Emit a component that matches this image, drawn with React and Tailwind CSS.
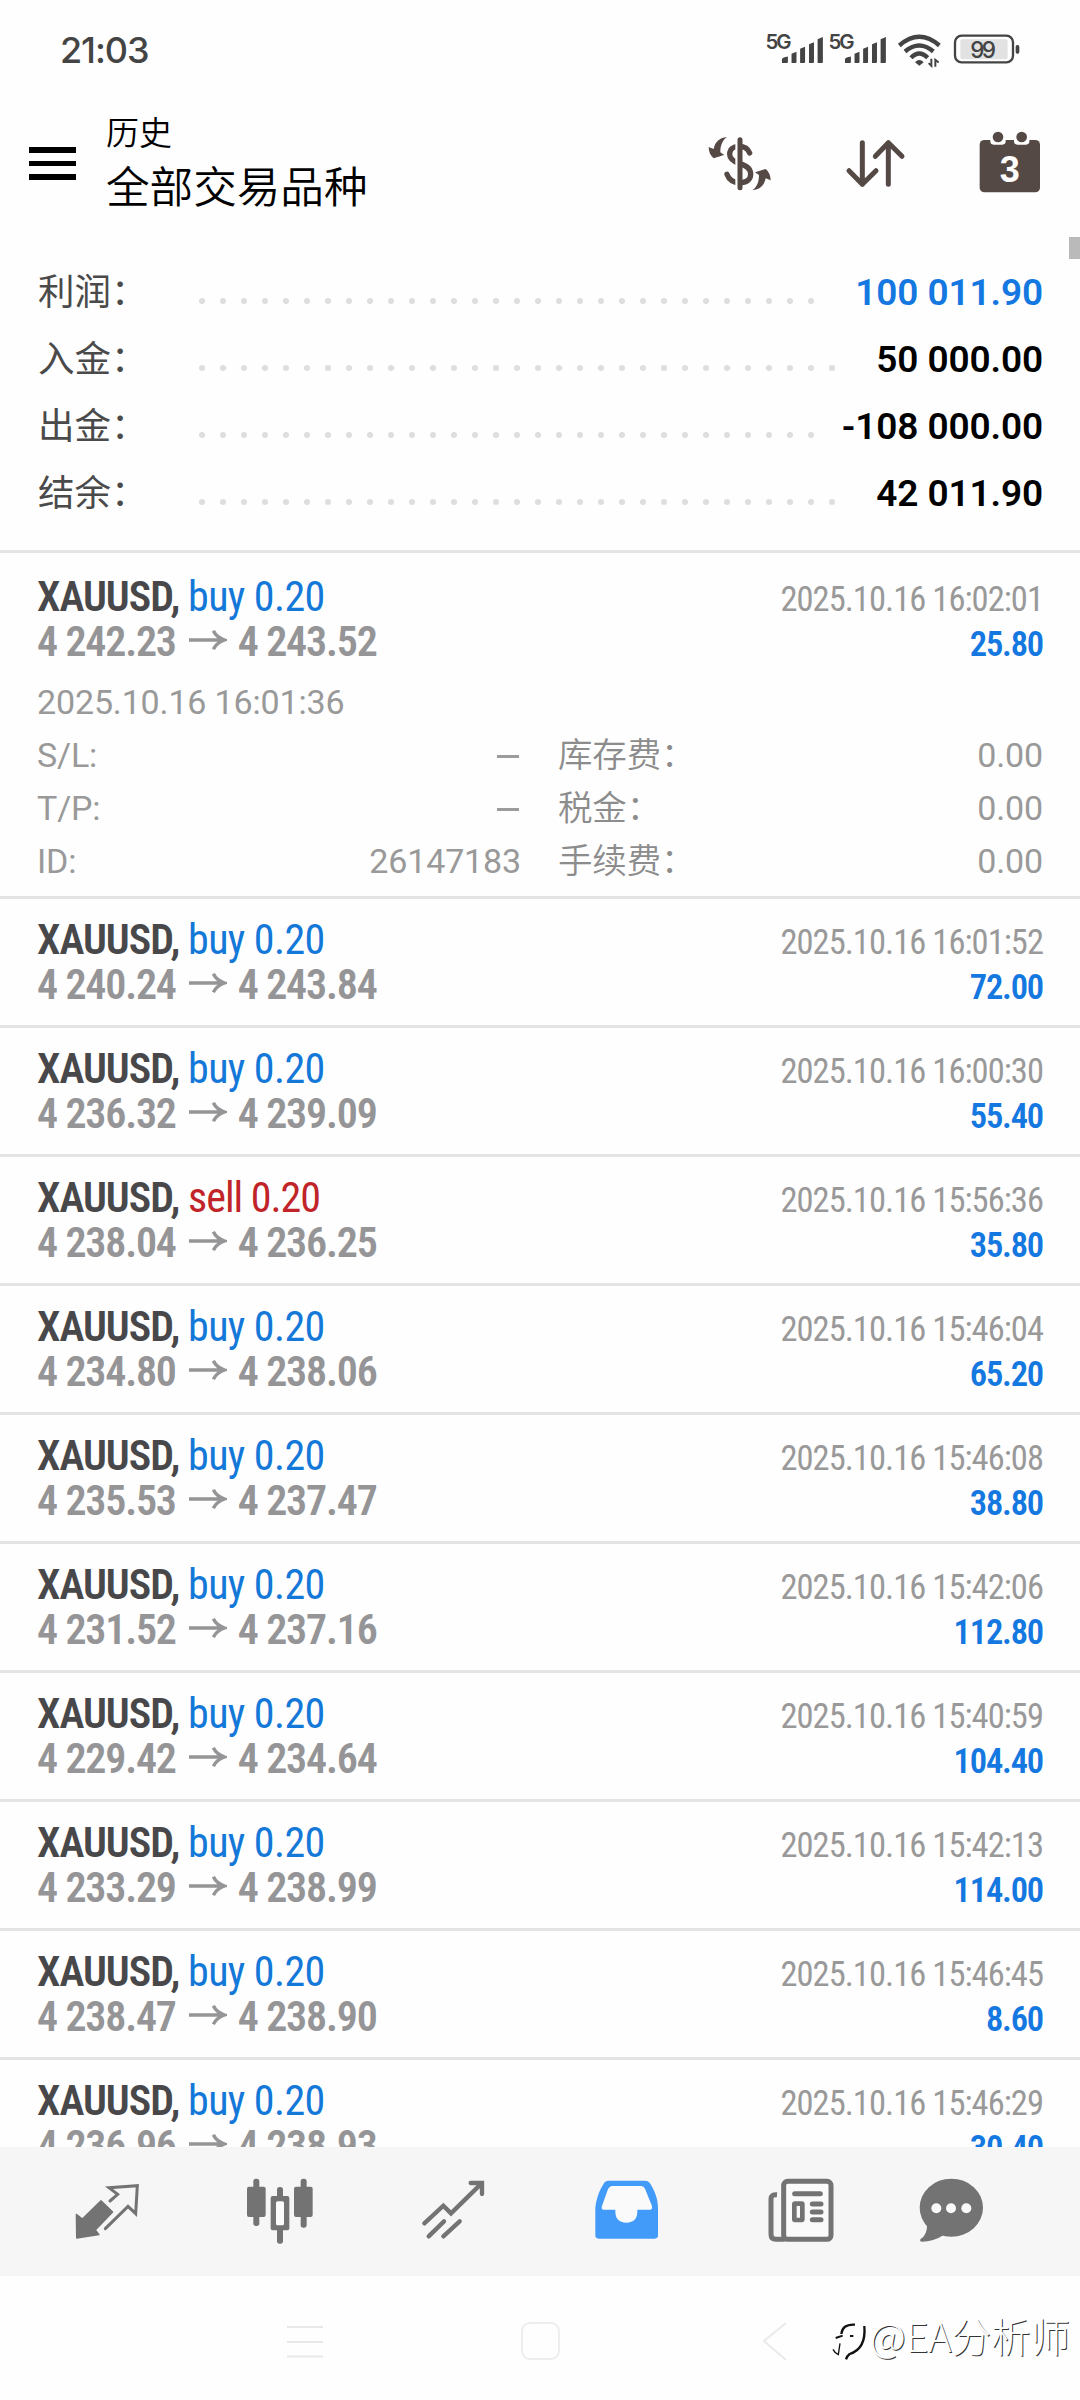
import clsx from "clsx";

const summary = [
  { label: "利润：", value: "100 011.90", blue: true },
  { label: "入金：", value: "50 000.00" },
  { label: "出金：", value: "-108 000.00" },
  { label: "结余：", value: "42 011.90" },
];

const deals = [
  { type: "buy", from: "4 242.23", to: "4 243.52", time: "2025.10.16 16:02:01", profit: "25.80", open: true },
  { type: "buy", from: "4 240.24", to: "4 243.84", time: "2025.10.16 16:01:52", profit: "72.00" },
  { type: "buy", from: "4 236.32", to: "4 239.09", time: "2025.10.16 16:00:30", profit: "55.40" },
  { type: "sell", from: "4 238.04", to: "4 236.25", time: "2025.10.16 15:56:36", profit: "35.80" },
  { type: "buy", from: "4 234.80", to: "4 238.06", time: "2025.10.16 15:46:04", profit: "65.20" },
  { type: "buy", from: "4 235.53", to: "4 237.47", time: "2025.10.16 15:46:08", profit: "38.80" },
  { type: "buy", from: "4 231.52", to: "4 237.16", time: "2025.10.16 15:42:06", profit: "112.80" },
  { type: "buy", from: "4 229.42", to: "4 234.64", time: "2025.10.16 15:40:59", profit: "104.40" },
  { type: "buy", from: "4 233.29", to: "4 238.99", time: "2025.10.16 15:42:13", profit: "114.00" },
  { type: "buy", from: "4 238.47", to: "4 238.90", time: "2025.10.16 15:46:45", profit: "8.60" },
  { type: "buy", from: "4 236.96", to: "4 238.93", time: "2025.10.16 15:46:29", profit: "30.40" },
];

const details = [
  ["S/L:", "—", "库存费：", "0.00"],
  ["T/P:", "—", "税金：", "0.00"],
  ["ID:", "26147183", "手续费：", "0.00"],
];

const Signal = () => (
  <svg className="mt-[32px] h-[32px] w-[58px] overflow-visible" viewBox="0 0 175 97" fill="#444">
    <text x="-2" y="50" textLength="79" className="font-[Inter] text-[62px] font-semibold">
      5G
    </text>
    <path d="M48 94V82Q50 76 66 74V91Q66 94 63 94ZM77 94V66L92 60V91Q92 94 89 94ZM103 94V51L118 45V91Q118 94 115 94ZM130 94V37L145 31V91Q145 94 142 94ZM156 94V22L172 15V91Q172 94 169 94Z" />
  </svg>
);

const StatusBar = () => (
  <div className="flex h-[100px] shrink-0 items-start justify-between pr-[59px] pl-[60px] text-[#444]">
    <span className="mt-[28px] font-[Inter] text-[36px] leading-[44px] font-medium tracking-[-1.1px]">21:03</span>
    <div className="flex items-start">
      <div className="flex gap-[5px]">
        <Signal />
        <Signal />
      </div>
      <svg className="mt-[33px] ml-[10px] h-[35px] w-[44px]" viewBox="0 0 132 104" fill="none" stroke="#444" strokeWidth="13">
        <path d="M7 37Q67 -15 127 37M24 55Q67 19 109 55M42 74Q67 48 92 74" />
        <path d="M54 87Q67 74 80 87L67 98Z" fill="#444" stroke="none" />
        <path d="M103 77V98L95 90M115 101V80L125 88" strokeWidth="6" />
      </svg>
      <svg className="mt-[33px] ml-[12px] h-[32px] w-[68px]" viewBox="0 0 204 96" fill="#444">
        <rect x="6" y="8" width="174" height="80" rx="20" fill="none" stroke="#444" strokeWidth="7" />
        <rect x="22" y="19" width="142" height="60" rx="8" fill="#e2e2e2" />
        <rect x="188" y="36" width="11" height="26" rx="5" />
        <text x="52" y="74" textLength="77" className="font-[Inter] text-[68px] font-medium">
          99
        </text>
      </svg>
    </div>
  </div>
);

const Header = () => (
  <div className="flex h-[138px] shrink-0 items-start justify-between pr-[38px] pl-[29px]">
    <div className="flex">
      <div className="mt-[47px] flex h-[33px] w-[47px] flex-col justify-between">
        <span className="h-[6px] bg-black" />
        <span className="h-[5px] bg-black" />
        <span className="h-[6px] bg-black" />
      </div>
      <div className="mt-[11px] ml-[30px] font-[350] text-black">
        <p className="text-[33px] leading-[45px]">历史</p>
        <p className="text-[43.6px] leading-[65px]">全部交易品种</p>
      </div>
    </div>
    <div className="mt-[30px] flex items-center gap-[71px]">
      <svg className="mt-[3px] -mr-px h-[58px] w-[68px]" viewBox="0 0 204 174" fill="none" stroke="#554946" strokeLinecap="round">
        <path
          d="M128 54C122 38 108 34 96 34C78 34 68 44 68 58C68 72 80 80 98 86C120 92 131 102 131 118C131 134 118 143 98 143C76 143 66 134 60 118"
          strokeWidth="16"
        />
        <path d="M90 16V158" stroke="#fefefe" strokeWidth="10" strokeLinecap="butt" />
        <path d="M99 14V158" strokeWidth="15" />
        <g fill="#554946" stroke="none">
          <path id="swap" d="M60 6C38 8 24 20 20 42L5 36C5 50 10 62 20 70C32 66 44 62 52 60L40 52C40 32 46 16 60 6Z" />
          <use href="#swap" transform="rotate(180 98 86)" />
        </g>
      </svg>
      <svg className="mt-[2px] h-[53px] w-[62px]" viewBox="0 0 186 159" fill="none" stroke="#554946" strokeWidth="15" strokeLinecap="round" strokeLinejoin="round">
        <path d="M52 17V142M12 101L52 142L93 101M130 142V17M91 58L130 17L171 58" />
      </svg>
      <svg className="h-[64px] w-[64px]" viewBox="0 0 192 192" fill="#554946">
        <rect x="5" y="30" width="181" height="157" rx="14" />
        <rect x="37" y="10" width="46" height="34" rx="10" fill="#fefefe" />
        <rect x="108" y="10" width="46" height="34" rx="10" fill="#fefefe" />
        <circle cx="60" cy="21" r="16" />
        <circle cx="131" cy="21" r="16" />
        <text x="95" y="155" textAnchor="middle" fill="#fefefe" className="font-['Liberation_Sans'] text-[108px] font-bold">
          3
        </text>
      </svg>
    </div>
  </div>
);

const Summary = () => (
  <div className="h-[315px] shrink-0 border-b-3 border-[#e4e4e4] px-[37px] pt-[22px]">
    {summary.map((row) => (
      <div key={row.label} className="flex h-[67px] leading-[66px]">
        <span className="w-[162px] shrink-0 pl-px text-[36.5px] text-[#4a4a4a]">{row.label}</span>
        <div className="mt-[38px] mr-[24px] flex h-[6px] flex-1 flex-wrap gap-[15px] overflow-hidden">
          {Array.from({ length: 34 }, (_, i) => (
            <span key={i} className="size-[6px] rounded-full bg-[#dedede]" />
          ))}
        </div>
        <span className={clsx("text-[37px] font-semibold tracking-[-0.1px] whitespace-nowrap", row.blue ? "text-[#1478e0]" : "text-black")}>
          {row.value}
        </span>
      </div>
    ))}
  </div>
);

const Details = () => (
  <div className="mt-[12px] pb-[8px] text-[34px] leading-[53px] tracking-[-0.15px] text-[#999]">
    <p>2025.10.16 16:01:36</p>
    {details.map(([a, b, c, d]) => (
      <div key={a} className="flex h-[53px] gap-[37px]">
        <div className="flex w-[484px] justify-between">
          <span>{a}</span>
          {b === "—" ? <span className="mt-[26px] mr-[2px] h-[3px] w-[22px] bg-[#9c9c9c]" /> : <span>{b}</span>}
        </div>
        <div className="flex flex-1 justify-between">
          <span className="text-[34.5px] font-[350] text-[#8c8c8c]">{c}</span>
          <span>{d}</span>
        </div>
      </div>
    ))}
  </div>
);

const Deal = ({ deal }) => (
  <div className={clsx("shrink-0 border-b-3 border-[#e4e4e4] px-[37px]", deal.open ? "pt-[21px]" : "h-[129px] pt-[18px]")}>
    <div className="font-['Roboto_Condensed'] leading-[45px]">
      <div className="flex h-[45px] items-baseline justify-between">
        <p className="text-[42px]">
          <span className="font-semibold tracking-[-1px] text-[#48484b]">XAUUSD,</span>{" "}
          <span
            className={
              deal.type === "buy" ? "-ml-px tracking-[-0.6px] text-[#1478d8]" : "-ml-px tracking-[-1px] text-[#c02428]"
            }
          >
            {deal.type} 0.20
          </span>
        </p>
        <span className="text-[34.5px] tracking-[-0.95px] text-[#999]">{deal.time}</span>
      </div>
      <div className="flex h-[45px] items-baseline justify-between">
        <div className="flex text-[42px] font-semibold tracking-[-1.2px] text-[#959597]">
          <span>{deal.from}</span>
          <svg className="mr-[11px] ml-[12px] mt-[10px] h-[22px] w-[39px]" viewBox="0 0 40 22" fill="none" stroke="#959597" strokeWidth="3.5">
            <path d="M1 11H37M26 1.5Q29 8 37.5 11Q29 14 26 20.5" />
          </svg>
          <span>{deal.to}</span>
        </div>
        <span className="text-[34.5px] font-semibold tracking-[-1.2px] text-[#1478e0]">{deal.profit}</span>
      </div>
    </div>
    {deal.open && <Details />}
  </div>
);

const TabBar = () => (
  <div className="flex h-[129px] shrink-0 items-start gap-[105px] bg-[#f6f6f6] pt-[30px] pl-[73px] text-[#737373]">
    <svg className="mt-[3px] h-[62px] w-[68px]" viewBox="0 0 204 186" fill="none" stroke="currentColor">
      <path d="M10 103L28 117L84 62L119 96L67 150L78 164L11 174Z" fill="currentColor" strokeWidth="4" strokeLinejoin="round" />
      <path d="M111 63L134 43L108 23L193 17L188 101L165 79L97 146" strokeWidth="9" strokeLinecap="round" />
    </svg>
    <svg className="-ml-px h-[68px] w-[70px]" viewBox="0 0 210 204" fill="currentColor">
      <rect x="6" y="29" width="56" height="91" rx="6" />
      <rect x="25" y="5" width="18" height="142" rx="8" />
      <rect x="96" y="30" width="18" height="170" rx="8" />
      <rect x="77" y="57" width="56" height="103" rx="6" />
      <rect x="93" y="73" width="24" height="72" rx="5" fill="#fcfcfc" />
      <rect x="147" y="29" width="56" height="91" rx="6" />
      <rect x="167" y="5" width="18" height="147" rx="8" />
    </svg>
    <svg className="mt-[1px] h-[62px] w-[68px]" viewBox="0 0 204 186" fill="none" stroke="currentColor" strokeWidth="13" strokeLinecap="round">
      <path d="M13 136L70 83L93 106L184 17M26 175L72 130M70 175L119 130" />
      <path d="M152 15H186V48" />
    </svg>
    <svg className="mt-[1px] h-[62px] w-[68px]" viewBox="0 0 204 186">
      <path d="M7 90C10 60 20 36 32 17C36 10 40 8 46 8H156C162 8 167 10 171 16C183 36 195 60 195 90V172Q195 182 185 182H17Q7 182 7 172Z" fill="#429bf9" />
      <path d="M58 24H145Q152 24 156 32L176 82Q180 95 172 95H133V100Q133 134 100 134Q67 134 67 100V95H32Q24 95 27 84L44 36Q49 24 58 24Z" fill="#fafafa" />
    </svg>
    <svg className="h-[68px] w-[68px]" viewBox="0 0 204 204" fill="none" stroke="currentColor" strokeWidth="15">
      <path d="M33 53Q15 52 15 66V172Q15 187 30 187H56" />
      <rect x="53" y="13" width="142" height="174" rx="12" fill="#fafafa" />
      <path d="M86 50H163M139 81H165M139 105H165M139 128H165" strokeLinecap="round" />
      <rect x="85" y="80" width="24" height="49" rx="2" strokeWidth="14" />
    </svg>
    <svg className="-ml-[22px] h-[68px] w-[68px]" viewBox="0 0 204 204" fill="currentColor">
      <ellipse cx="103" cy="92" rx="95" ry="87" />
      <path d="M30 140Q32 172 10 187Q8 194 14 194Q50 194 80 174Z" />
      <g fill="#fafafa">
        <circle cx="58" cy="94" r="15" />
        <circle cx="102" cy="94" r="15" />
        <circle cx="148" cy="94" r="15" />
      </g>
    </svg>
  </div>
);

const SystemNav = () => (
  <div className="relative flex h-[124px] shrink-0 items-start pt-[45px] pl-[286px]">
    <svg className="h-[40px] w-[40px]" viewBox="0 0 40 40" stroke="#e8e8e8" strokeWidth="2">
      <path d="M1 6H37M1 21H37M1 35.5H37" />
    </svg>
    <svg className="ml-[194px] h-[42px] w-[42px]" viewBox="0 0 42 42" fill="none" stroke="#eeeeee" strokeWidth="2">
      <rect x="2" y="2" width="37" height="36" rx="8" />
    </svg>
    <svg className="ml-[199px] h-[42px] w-[30px]" viewBox="0 0 30 42" fill="none" stroke="#eaeaea" strokeWidth="2">
      <path d="M25 2L3 20L25 39" />
    </svg>
    <div className="absolute top-[35px] right-[10px] flex items-center gap-[4px]">
      <svg className="mt-[6px] h-[40px] w-[35px] overflow-visible" viewBox="0 0 105 120" fill="none" stroke="#111">
        <path d="M31 48Q34 18 72 20" strokeWidth="7" />
        <path d="M14 60L35 53M57 54H67" strokeWidth="6" />
        <path d="M100 24Q106 92 56 108Q48 114 45 124" strokeWidth="7" />
        <path d="M6 94Q12 106 22 110L27 76" strokeWidth="4" />
      </svg>
      <span className="font-['Noto_Sans_CJK_SC'] text-[39.5px] leading-[48px] font-light whitespace-nowrap text-white [text-shadow:1px_1px_0px_#333]">
        @EA分析师
      </span>
    </div>
  </div>
);

export default function App() {
  return (
    <div className="relative flex h-[2400px] w-[1080px] flex-col overflow-hidden bg-[#fefefe] font-[Roboto,'Noto_Sans_CJK_SC',sans-serif]">
      <StatusBar />
      <Header />
      <span className="absolute top-[237px] right-0 h-[22px] w-[11px] bg-[#bababa]" />
      <Summary />
      <div className="flex min-h-0 flex-1 flex-col overflow-hidden">
        {deals.map((deal) => (
          <Deal key={deal.time} deal={deal} />
        ))}
      </div>
      <TabBar />
      <SystemNav />
    </div>
  );
}
